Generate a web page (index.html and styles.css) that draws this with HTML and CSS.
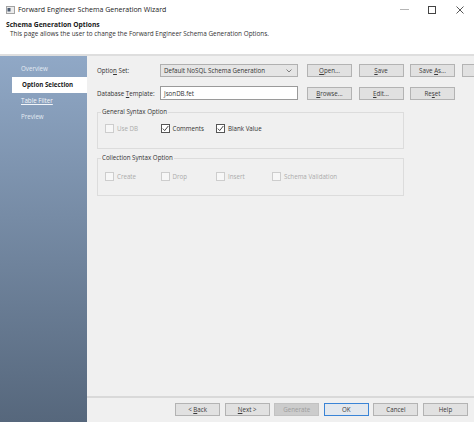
FILE: index.html
```html
<!DOCTYPE html>
<html>
<head>
<meta charset="utf-8">
<link rel="stylesheet" href="styles.css">
</head>
<body>
<div class="window">
  <div class="titlebar">
    <svg class="app-icon" width="9" height="8" viewBox="0 0 9 8"><rect x="0.5" y="0.5" width="8" height="7" fill="#ececec" stroke="#a3a3a3"/><rect x="1.5" y="2" width="3" height="3.5" fill="#4d5d73"/></svg>
    <span class="title">Forward Engineer Schema Generation Wizard</span>
    <div class="controls">
      <span class="ctl"><svg width="9" height="9" viewBox="0 0 9 9"><line x1="0" y1="4.5" x2="9" y2="4.5" stroke="#b5b5b5" stroke-width="1"/></svg></span>
      <span class="ctl"><svg width="8" height="8" viewBox="0 0 8 8"><rect x="0.5" y="0.5" width="7" height="7" fill="none" stroke="#444" stroke-width="1"/></svg></span>
      <span class="ctl"><svg width="8" height="8" viewBox="0 0 8 8"><path d="M0.5 0.5 L7.5 7.5 M7.5 0.5 L0.5 7.5" stroke="#444" stroke-width="0.9"/></svg></span>
    </div>
  </div>
  <div class="header">
    <div class="h-title">Schema Generation Options</div>
    <div class="h-sub">This page allows the user to change the Forward Engineer Schema Generation Options.</div>
  </div>
  <div class="body">
    <nav class="sidebar">
      <div class="nav-item">Overview</div>
      <div class="nav-item active">Option Selection</div>
      <div class="nav-item link">Table Filter</div>
      <div class="nav-item">Preview</div>
    </nav>
    <main class="main">
      <div class="form">
        <div class="row">
          <span class="lbl">Optio<u>n</u> Set:</span>
          <div class="select"><span>Default NoSQL Schema Generation</span><svg class="chev" width="6" height="4" viewBox="0 0 6 4"><path d="M0.5 0.5 L3 3 L5.5 0.5" fill="none" stroke="#666" stroke-width="0.8"/></svg></div>
          <div class="btns">
            <button class="btn"><u>O</u>pen...</button>
            <button class="btn"><u>S</u>ave</button>
            <button class="btn">Save <u>A</u>s...</button>
            <button class="btn"></button>
          </div>
        </div>
        <div class="row row2">
          <span class="lbl">Database <u>T</u>emplate:</span>
          <div class="input">JsonDB.fet</div>
          <div class="btns">
            <button class="btn"><u>B</u>rowse...</button>
            <button class="btn"><u>E</u>dit...</button>
            <button class="btn">Re<u>s</u>et</button>
          </div>
        </div>
        <fieldset class="group g1">
          <legend>General Syntax Option</legend>
          <div class="cbrow">
            <span class="cb disabled"><span class="box"></span>Use DB</span>
            <span class="cb"><span class="box"><svg width="7" height="7" viewBox="0 0 7 7"><path d="M0.8 3.6 L2.7 5.6 L6.3 1" fill="none" stroke="#333" stroke-width="0.9"/></svg></span>Comments</span>
            <span class="cb"><span class="box"><svg width="7" height="7" viewBox="0 0 7 7"><path d="M0.8 3.6 L2.7 5.6 L6.3 1" fill="none" stroke="#333" stroke-width="0.9"/></svg></span>Blank Value</span>
          </div>
        </fieldset>
        <fieldset class="group g2">
          <legend>Collection Syntax Option</legend>
          <div class="cbrow">
            <span class="cb disabled"><span class="box"></span>Create</span>
            <span class="cb disabled"><span class="box"></span>Drop</span>
            <span class="cb disabled"><span class="box"></span>Insert</span>
            <span class="cb disabled"><span class="box"></span>Schema Validation</span>
          </div>
        </fieldset>
      </div>
      <div class="footer">
        <button class="btn">&lt; <u>B</u>ack</button>
        <button class="btn"><u>N</u>ext &gt;</button>
        <button class="btn off">Generate</button>
        <button class="btn ok">OK</button>
        <button class="btn">Cancel</button>
        <button class="btn">Help</button>
      </div>
    </main>
  </div>
</div>
</body>
</html>
```
FILE: styles.css
```css
* { box-sizing: border-box; }
html, body { margin: 0; padding: 0; }
body {
  width: 474px;
  height: 422px;
  overflow: hidden;
  font-family: "Open Sans", "Noto Sans", sans-serif;
  font-size: 6.2px;
  color: #2a2a2a;
  background: #f0f0f0;
}
.window {
  width: 474px;
  height: 422px;
  display: flex;
  flex-direction: column;
  overflow: hidden;
}
.titlebar {
  height: 19px;
  flex: none;
  background: #fff;
  display: flex;
  align-items: center;
  padding-left: 6px;
}
.app-icon { margin-right: 3px; flex: none; }
.title { font-size: 7px; line-height: 10px; color: #222; }
.controls { margin-left: auto; display: flex; height: 19px; padding-right: 0; }
.ctl { width: 28px; display: flex; align-items: center; justify-content: center; }

.header {
  height: 37px;
  flex: none;
  background: #fff;
  padding: 2px 0 0 6px;
  border-bottom: 2px solid #dedede;
}
.h-title { font-weight: bold; font-size: 6.7px; line-height: 8px; color: #1a1a1a; }
.h-sub { padding-left: 4px; font-size: 6.4px; line-height: 8px; margin-top: 1px; color: #333; }

.body { flex: 1; display: flex; min-height: 0; }
.sidebar {
  width: 87px;
  flex: none;
  padding-top: 5px;
  background: linear-gradient(#90a8c6, #56677c);
}
.nav-item {
  height: 16px;
  line-height: 16px;
  padding-left: 21px;
  color: #e4ebf3;
}
.nav-item.active {
  margin-left: 12px;
  padding-left: 10px;
  background: #fff;
  color: #1a1a1a;
  font-weight: bold;
}
.nav-item.link { text-decoration: underline; color: #f3f6fa; }

.main { flex: 1; display: flex; flex-direction: column; min-width: 0; }
.form { flex: 1; padding: 8px 0 0 10px; overflow: hidden; }
.row { display: flex; align-items: center; height: 13px; }
.row2 { margin-top: 9px; height: 14px; }
.lbl { width: 63px; flex: none; color: #333; }
.select {
  width: 138px;
  height: 13px;
  flex: none;
  background: #e5e5e5;
  border: 1px solid #b0b0b0;
  padding: 0 5px 0 3px;
  display: flex;
  align-items: center;
  justify-content: space-between;
  color: #333;
}
.input {
  width: 138px;
  height: 14px;
  flex: none;
  background: #fff;
  border: 1px solid #9a9a9a;
  padding-left: 3px;
  display: flex;
  align-items: center;
  color: #333;
}
.btns { display: flex; gap: 6.5px; margin-left: 9px; }
.btn {
  width: 45px;
  height: 13px;
  flex: none;
  padding: 0;
  margin: 0;
  font: inherit;
  line-height: 11px;
  color: #3a3a3a;
  background: #e1e1e1;
  border: 1px solid #b3b3b3;
  border-radius: 0;
}
.btn.off { background: #cccccc; border-color: #c2c2c2; color: #9d9d9d; }
.btn.ok { border-color: #3a84d6; background: #e3e8ee; }

.group {
  width: 307px;
  margin: 0;
  padding: 0 0 0 7px;
  border: 1px solid #dcdcdc;
}
.group legend { padding: 0 1px; margin-left: -4px; line-height: 8px; color: #333; }
.g1 { margin-top: 8px; padding-bottom: 14px; }
.g1 .cbrow { margin-top: 6px; }
.g2 { margin-top: 5px; padding-bottom: 13px; }
.g2 .cbrow { margin-top: 8px; }
.cbrow { display: grid; grid-template-columns: 55.5px 55.5px 56px auto; height: 12px; align-items: center; }
.cb { display: flex; align-items: center; color: #333; }
.box {
  width: 9px;
  height: 9px;
  flex: none;
  margin-right: 3px;
  background: #fff;
  border: 1px solid #555;
  display: flex;
  align-items: center;
  justify-content: center;
}
.cb.disabled { color: #ababab; }
.cb.disabled .box { border-color: #cdcdcd; background: #f7f7f7; }

.footer {
  height: 26px;
  flex: none;
  border-top: 2px solid #d9d9d9;
  padding: 5px 6px 0 0;
  display: flex;
  justify-content: flex-end;
  gap: 4.6px;
}
```
